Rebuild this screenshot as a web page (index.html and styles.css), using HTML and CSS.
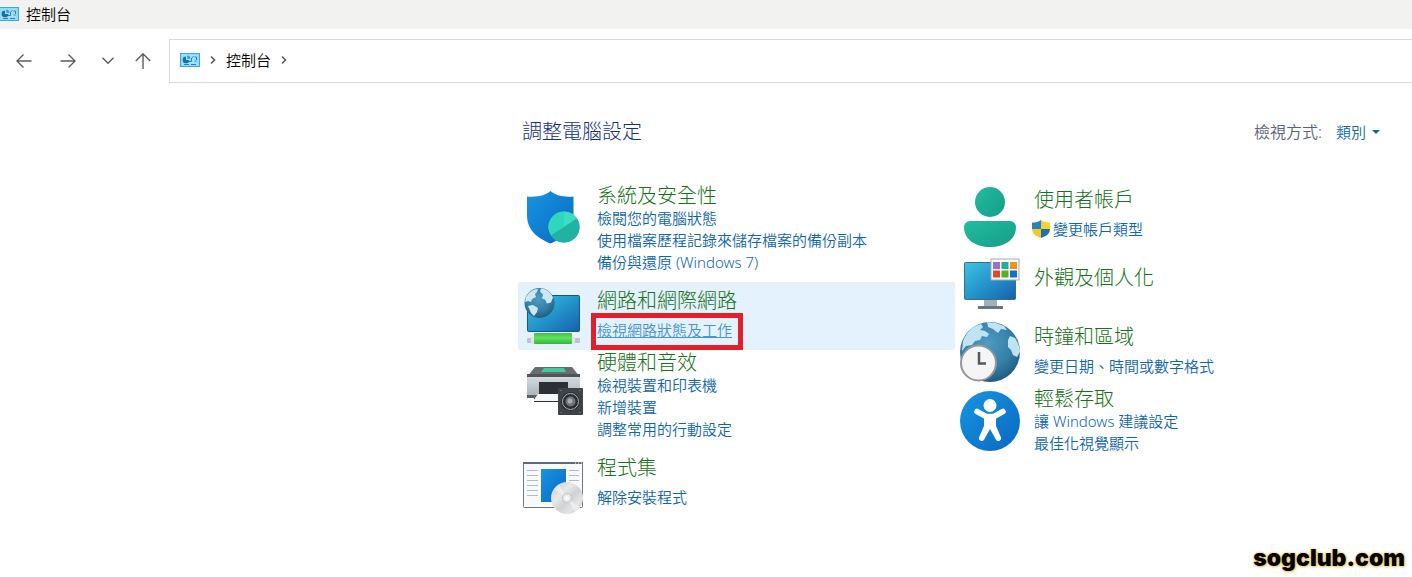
FILE: index.html
```html
<!DOCTYPE html>
<html lang="zh-Hant">
<head>
<meta charset="utf-8">
<meta name="viewport" content="width=device-width, initial-scale=1">
<title>控制台</title>
<link rel="stylesheet" href="styles.css">
</head>
<body>
<svg class="defs" width="0" height="0" aria-hidden="true">
  <defs>
    <linearGradient id="g-blue" x1="0" y1="0" x2="1" y2="1"><stop offset="0" stop-color="#1795e2"/><stop offset="1" stop-color="#0a68c0"/></linearGradient>
    <linearGradient id="g-screen" x1="0" y1="0" x2="1" y2="1"><stop offset="0" stop-color="#3cc4e2"/><stop offset=".5" stop-color="#2495cc"/><stop offset="1" stop-color="#1560ac"/></linearGradient>
    <linearGradient id="g-teal" x1="0" y1="0" x2="1" y2="1"><stop offset="0" stop-color="#22bda2"/><stop offset="1" stop-color="#159c86"/></linearGradient>
    <radialGradient id="g-globe" cx=".45" cy=".35" r=".7"><stop offset="0" stop-color="#4d9cc4"/><stop offset=".6" stop-color="#347fa8"/><stop offset="1" stop-color="#1f5577"/></radialGradient>
    <linearGradient id="g-gray" x1="0" y1="0" x2="0" y2="1"><stop offset="0" stop-color="#d3d9df"/><stop offset="1" stop-color="#a9b1b8"/></linearGradient>
    <linearGradient id="g-disc" x1="0" y1="0" x2="1" y2="1"><stop offset="0" stop-color="#c5c8cb"/><stop offset=".35" stop-color="#e6e8e9"/><stop offset=".55" stop-color="#cfd1d3"/><stop offset=".75" stop-color="#e3e5e6"/><stop offset="1" stop-color="#bfc2c5"/></linearGradient>
    <linearGradient id="g-cable" x1="0" y1="0" x2="0" y2="1"><stop offset="0" stop-color="#3fc045"/><stop offset=".45" stop-color="#62e25e"/><stop offset="1" stop-color="#37b33e"/></linearGradient>
    <symbol id="panel" viewBox="0 0 20 14">
      <rect x=".5" y=".5" width="19" height="13" fill="#8fdcf6" stroke="#43a5d2"/>
      <path d="M2 2h15v9H2z" fill="#a0e0f6"/>
      <path d="M6 3.500a3.400 3.400 0 1 0 3.400 3.400H6z" fill="#1770ad"/>
      <path d="M7.300 2.500v3.200h3A3.200 3.200 0 0 0 7.300 2.500z" fill="#3298cc"/>
      <path d="M9 8.500h2.500V5l2-1.500M14.500 4h2v3M14.500 8h2" fill="none" stroke="#2a80b8"/>
      <path d="M4 11.500h5M11 11.500h5" stroke="#2382bd"/>
    </symbol>
  </defs>
</svg>

<header class="titlebar">
  <svg class="panel-icon" aria-hidden="true"><use href="#panel"/></svg>
  <span>控制台</span>
</header>

<nav class="toolbar" aria-label="導覽">
  <div class="nav-buttons">
    <button type="button" aria-label="上一頁"><svg viewBox="0 0 16 16"><path d="M15.500 8H1.200M7.500 1.500L1 8l6.500 6.500"/></svg></button>
    <button type="button" aria-label="下一頁"><svg viewBox="0 0 16 16"><path d="M.5 8h14.300M8.500 1.500L15 8l-6.500 6.500"/></svg></button>
    <button type="button" class="narrow" aria-label="最近的位置"><svg viewBox="0 0 16 16"><path d="M2.500 4.800L8 10.300l5.500-5.500"/></svg></button>
    <button type="button" class="narrow" aria-label="上一層"><svg viewBox="0 0 16 16"><path d="M8 16V.8M.8 8L8 .8 15.200 8"/></svg></button>
  </div>
  <div class="address">
    <svg class="panel-icon" aria-hidden="true"><use href="#panel"/></svg>
    <svg class="chevron" viewBox="0 0 8 10" aria-hidden="true"><path d="M2 1.500L5.500 5 2 8.500"/></svg>
    <a href="#">控制台</a>
    <svg class="chevron" viewBox="0 0 8 10" aria-hidden="true"><path d="M2 1.500L5.500 5 2 8.500"/></svg>
  </div>
</nav>

<main class="content">
  <div class="heading-row">
    <h1>調整電腦設定</h1>
    <div class="view">
      <label for="view">檢視方式:</label>
      <div class="view-select">
        <select id="view"><option>類別</option></select>
        <svg viewBox="0 0 8 4" aria-hidden="true"><path d="M0 0h8L4 4z"/></svg>
      </div>
    </div>
  </div>

  <div class="columns">
    <div class="column first">
      <section class="item multi">
        <svg class="icon" viewBox="0 0 60 64" aria-hidden="true">
          <path d="M27.500 4C32 8 40 10.500 50.500 9.500V28c0 15-10 23-23 28.500C14 51 4 43 4 28V9.500C15 10.500 23 8 27.500 4z" fill="url(#g-blue)"/>
          <circle cx="41" cy="40" r="15.500" fill="#27bfae"/>
          <path d="M41 24.500A15.500 15.500 0 0 0 28 48.500L41 40z" fill="#32d5be"/>
          <path d="M41 24.500v15.500l13-8.500A15.500 15.500 0 0 0 41 24.500z" fill="#3cdcc3"/>
          <path d="M28 48.500L41 40l13-8.500A15.500 15.500 0 0 1 28 48.500z" fill="#21b2a1"/>
        </svg>
        <div class="text">
          <h2><a href="#">系統及安全性</a></h2>
          <a href="#">檢閱您的電腦狀態</a>
          <a href="#">使用檔案歷程記錄來儲存檔案的備份副本</a>
          <a href="#">備份與還原 (Windows 7)</a>
        </div>
      </section>

      <section class="item single active">
        <svg class="icon" viewBox="0 0 60 64" aria-hidden="true">
          <rect x="4.500" y="9.500" width="52" height="36" rx="1" fill="url(#g-screen)" stroke="#1c5484"/>
          <rect x="4" y="52" width="53" height="5" rx="1" fill="#bcc4c8"/>
          <rect x="8" y="51" width="4" height="7" fill="#e2e5e7"/>
          <rect x="48" y="51" width="4" height="7" fill="#e2e5e7"/>
          <rect x="11" y="47" width="38" height="11" rx="1" fill="url(#g-cable)"/>
          <circle cx="16.500" cy="17" r="15" fill="url(#g-globe)"/>
          <path d="M3 11c3-5 7-8 12-8l-1 3-2 2 1 3-4 2-1 3-3-1-3 1zM18 2.500c5 0 10 4 12 9l-2 5-4 1-2-4-3-1 1-4-3-3zM5 20l5-1 5 3-1 4-3 4-3-3z" fill="#cfe7f2"/>
        </svg>
        <div class="text">
          <h2><a href="#">網路和網際網路</a></h2>
          <a class="marked" href="#">檢視網路狀態及工作</a>
        </div>
      </section>

      <section class="item multi">
        <svg class="icon" viewBox="0 0 60 64" aria-hidden="true">
          <path d="M12 13h37l8 10H4z" fill="#686d72"/>
          <path d="M21 14h20l2 4H18z" fill="#44c99e"/>
          <path d="M4 23h53v20H4z" fill="url(#g-gray)"/>
          <path d="M4 20l-0 3h53v-3z" fill="#50555a"/>
          <path d="M4 41h53v3H4z" fill="#5a5f64"/>
          <path d="M16 28h29v12H16z" fill="#2c2f33"/>
          <path d="M11 44h28v4H11z" fill="#303337"/>
          <path d="M15 40h22v7H10z" fill="#f3f5f7"/>
          <rect x="35" y="34" width="25" height="27" rx="1" fill="#3f4246"/>
          <circle cx="47.500" cy="47.500" r="9.500" fill="#2b2e31"/>
          <circle cx="47.500" cy="47.500" r="8" fill="none" stroke="#aeb2b5"/>
          <circle cx="47.500" cy="47.500" r="5" fill="#6f7478"/>
          <circle cx="47" cy="47" r="2.500" fill="#a9adb0"/>
          <path d="M37.500 36.500h1M56.500 36.500h1M37.500 58.500h1M56.500 58.500h1" stroke="#909396"/>
        </svg>
        <div class="text">
          <h2><a href="#">硬體和音效</a></h2>
          <a href="#">檢視裝置和印表機</a>
          <a href="#">新增裝置</a>
          <a href="#">調整常用的行動設定</a>
        </div>
      </section>

      <section class="item single">
        <svg class="icon" viewBox="0 0 60 64" aria-hidden="true">
          <rect x=".5" y="9.500" width="59" height="45" rx="1" fill="#f8f9fa" stroke="#72777b"/>
          <path d="M0 9h60v2H0z" fill="#626970"/>
          <path d="M52 10h1M55 10h1M58 10h1" stroke="#fff"/>
          <path d="M4 17.500h11M4 22.500h11M4 27.500h11M4 32.500h11M4 37.500h11M4 42.500h11M46 17.500h10M46 22.500h10M46 27.500h10" stroke="#b5babe"/>
          <path d="M18 16h25v33H18z" fill="url(#g-blue)"/>
          <circle cx="44" cy="45" r="16" fill="url(#g-disc)"/>
          <path d="M44 45L31 36l5-5zM44 45l13 9-5 5z" fill="#fff" opacity=".4"/>
          <circle cx="44" cy="45" r="4.500" fill="#e9ebec" stroke="#c3c6c9"/>
          <circle cx="44" cy="45" r="2" fill="#fff"/>
        </svg>
        <div class="text">
          <h2><a href="#">程式集</a></h2>
          <a href="#">解除安裝程式</a>
        </div>
      </section>
    </div>

    <div class="column">
      <section class="item single">
        <svg class="icon" viewBox="0 0 60 64" aria-hidden="true">
          <circle cx="30" cy="17" r="15" fill="url(#g-teal)"/>
          <path d="M10 36h40a6 6 0 0 1 6 6c0 13-12 20-26 20S4 55 4 42a6 6 0 0 1 6-6z" fill="url(#g-teal)"/>
        </svg>
        <div class="text">
          <h2><a href="#">使用者帳戶</a></h2>
          <a class="shielded" href="#"><svg viewBox="0 0 18 18" aria-hidden="true"><path d="M9 0C6.500 2 3.500 2.500 0 2.500V9h9z" fill="#2e7fc0"/><path d="M9 0c2.500 2 5.500 2.500 9 2.500V9H9z" fill="#f5d432"/><path d="M0 9c0 4.500 4 7.500 9 9V9z" fill="#f0c92b"/><path d="M18 9c0 4.500-4 7.500-9 9V9z" fill="#1f6fae"/></svg>變更帳戶類型</a>
        </div>
      </section>

      <section class="item title-only">
        <svg class="icon" viewBox="0 0 60 64" aria-hidden="true">
          <path d="M24 46h13v7H24z" fill="#a4afb7"/>
          <path d="M18 53h25v3H18z" fill="#69747d"/>
          <rect x="4.500" y="9.500" width="51" height="37" rx="1" fill="url(#g-screen)" stroke="#436b82"/>
          <rect x="31" y="6" width="28" height="21" fill="#fafafa" stroke="#a5abb0"/>
          <path d="M33 9h7v7h-7z" fill="#9b6fd0"/><path d="M41.500 9h7v7h-7z" fill="#1faca1"/><path d="M50 9h7v7h-7z" fill="#ef9216"/>
          <path d="M33 17.500h7v7h-7z" fill="#db4b2a"/><path d="M41.500 17.500h7v7h-7z" fill="#59ae21"/><path d="M50 17.500h7v7h-7z" fill="#166ec5"/>
        </svg>
        <div class="text">
          <h2><a href="#">外觀及個人化</a></h2>
        </div>
      </section>

      <section class="item single">
        <svg class="icon" viewBox="0 0 60 64" aria-hidden="true">
          <circle cx="30" cy="30" r="30" fill="url(#g-globe)"/>
          <path d="M3 19C7 9 13 4 21 2l2 3-3 3 5 1 4 3-2 3-5-1-2 4-5 1-3 4-6 1-4 5zM27 0l9 1 8 3 3 4-6-1-3 4-5-4-5-2zM50 14l5 2c3 5 5 9 5 14l-3 5-4-2-2-5-3-3 0-7z" fill="#bfe3f2"/>
          <circle cx="18.500" cy="41" r="17.500" fill="#f5f5f5" stroke="#929698" stroke-width="2"/>
          <path d="M19 30v11.500H26" fill="none" stroke="#56595c" stroke-width="2.500"/>
        </svg>
        <div class="text">
          <h2><a href="#">時鐘和區域</a></h2>
          <a href="#">變更日期、時間或數字格式</a>
        </div>
      </section>

      <section class="item multi">
        <svg class="icon" viewBox="0 0 60 64" aria-hidden="true">
          <circle cx="30" cy="31" r="30" fill="url(#g-blue)"/>
          <circle cx="30" cy="15.500" r="6.500" fill="#fff"/>
          <path d="M17 21.500l9 5h8l9-5" fill="none" stroke="#fff" stroke-width="5.500" stroke-linecap="round" stroke-linejoin="round"/>
          <path d="M24 25h12v11l5 11.500a2.800 2.800 0 0 1-5 2.300L30 39l-6 10.800a2.800 2.800 0 0 1-5-2.300L24 36z" fill="#fff"/>
        </svg>
        <div class="text">
          <h2><a href="#">輕鬆存取</a></h2>
          <a href="#">讓 Windows 建議設定</a>
          <a href="#">最佳化視覺顯示</a>
        </div>
      </section>
    </div>
  </div>
</main>

<div class="watermark">sogclub.com</div>
</body>
</html>
```

FILE: styles.css
```css
* {
  box-sizing: border-box;
}

body {
  position: relative;
  min-height: 100vh;
  margin: 0;
  background: #fff;
  color: #1b1b1b;
  font: 350 15px/22px "Noto Sans", "Noto Sans CJK TC", sans-serif;
}

a {
  color: #1266a8;
  text-decoration: none;
}

h1,
h2 {
  margin: 0;
  font-size: 20px;
  font-weight: 300;
  line-height: 22px;
}

.defs {
  position: absolute;
}

.titlebar {
  display: flex;
  align-items: center;
  gap: 7px;
  height: 29px;
  padding-bottom: 2px;
  background: #f2f2f0;
  color: #000;
}

.panel-icon {
  width: 20px;
  height: 14px;
}

.titlebar .panel-icon {
  margin-left: -1px;
}

.toolbar {
  display: flex;
  align-items: center;
  padding-top: 10px;
}

.nav-buttons {
  display: flex;
  flex: none;
  align-items: center;
  width: 169px;
  padding-left: 2px;
}

.nav-buttons button {
  display: grid;
  place-items: center;
  width: 44px;
  height: 32px;
  padding: 0;
  border: 0;
  background: none;
}

.nav-buttons .narrow {
  width: 35px;
}

.nav-buttons svg {
  width: 16px;
  height: 16px;
  fill: none;
  stroke: #5c5c5c;
  stroke-width: 1.4;
}

.address {
  display: flex;
  flex: 1;
  align-items: center;
  gap: 9px;
  height: 44px;
  padding: 0 0 2px 10px;
  border: 1px solid #d9d9d9;
  border-right: 0;
}

.address a {
  color: #000;
}

.chevron {
  width: 8px;
  height: 10px;
  fill: none;
  stroke: #555;
  stroke-width: 1.5;
}

.content {
  max-width: 874px;
  margin: 38px 20px 0 auto;
}

.heading-row {
  display: flex;
  justify-content: space-between;
  align-items: center;
  padding: 0 12px 0 4px;
}

h1 {
  color: #12307c;
}

.view,
.view-select {
  display: flex;
  align-items: center;
}

.view {
  gap: 14px;
  color: #5a6475;
}

.view label {
  font-size: 16px;
}

.view-select {
  gap: 5px;
}

.view select {
  appearance: none;
  margin: 0;
  padding: 0;
  border: 0;
  background: none;
  color: #1266a8;
  font: inherit;
}

.view-select svg {
  width: 8px;
  height: 4px;
  fill: #1266a8;
}

.columns {
  display: grid;
  grid-template-columns: 1fr 1fr;
  margin-top: 38px;
}

.first {
  padding-top: 2px;
}

.item {
  display: flex;
  gap: 14px;
  padding-left: 5px;
}

.icon {
  flex: none;
  width: 60px;
  height: 64px;
  margin-top: 4px;
}

.text {
  display: flex;
  flex-direction: column;
  align-items: flex-start;
}

.text h2 a {
  color: #17701b;
}

.multi .text {
  padding: 2px 0 9px;
}

.single .text {
  gap: 7px;
  padding: 8px 0 9px;
}

.title-only .text {
  padding: 18px 0 29px;
}

.active {
  border-radius: 2px;
  background: #e4f2fd;
}

.marked {
  position: relative;
  color: #4a94cc;
  text-decoration: underline;
}

.marked::after {
  content: "";
  position: absolute;
  inset: -6px -11px -9px -6px;
  border: 5px solid #e0202a;
}

.shielded {
  display: flex;
  align-items: center;
  gap: 3px;
  margin-left: -2px;
}

.shielded svg {
  width: 18px;
  height: 18px;
}

.watermark {
  position: absolute;
  right: 7px;
  bottom: 7px;
  color: #000;
  font: 900 23px/24px Inter, "Liberation Sans", sans-serif;
  text-shadow: 0 0 3px #d8b94c, 1px 1px 3px #e6cf7c;
}
```
